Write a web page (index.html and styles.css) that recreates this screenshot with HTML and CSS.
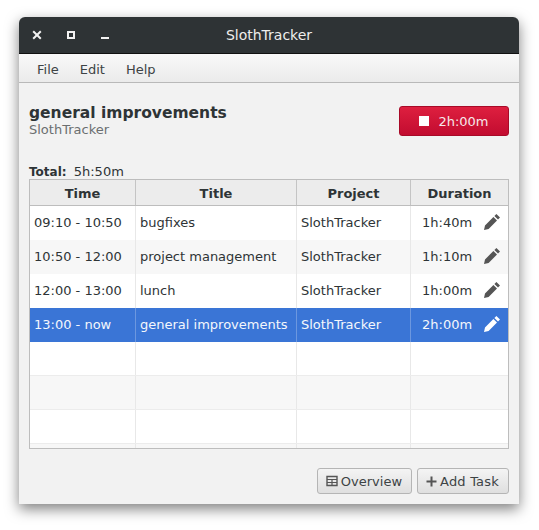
FILE: index.html
```html
<!DOCTYPE html>
<html lang="en">
<head>
    <meta charset="UTF-8">
    <title>SlothTracker</title>
    <link rel="stylesheet" href="styles.css">
</head>
<body>
    <div class="window">
        <div class="titlebar">
            <div class="controls">
                <svg class="ctl" width="12" height="12" viewBox="0 0 12 12"><path d="M2.2 2.2l7.6 7.6M9.8 2.2l-7.6 7.6" stroke="#f2f2f2" stroke-width="2" fill="none"/></svg>
                <svg class="ctl" width="12" height="12" viewBox="0 0 12 12"><rect x="3" y="3" width="6" height="6" stroke="#f2f2f2" stroke-width="2" fill="none"/></svg>
                <svg class="ctl" width="12" height="12" viewBox="0 0 12 12"><rect x="2" y="8" width="8" height="2" fill="#f2f2f2"/></svg>
            </div>
            <div class="title">SlothTracker</div>
        </div>
        <div class="menubar">
            <span>File</span>
            <span>Edit</span>
            <span>Help</span>
        </div>
        <div class="content">
            <div class="current">
                <div>
                    <div class="task-name">general improvements</div>
                    <div class="task-project">SlothTracker</div>
                </div>
                <button class="stop"><i class="stop-icon"></i>2h:00m</button>
            </div>
            <div class="total"><b>Total:</b> 5h:50m</div>
            <div class="table">
                <div class="row head">
                    <div>Time</div><div>Title</div><div>Project</div><div>Duration</div>
                </div>
                <div class="row">
                    <div>09:10 - 10:50</div><div>bugfixes</div><div>SlothTracker</div>
                    <div class="dur">1h:40m <svg class="pen" viewBox="0 0 16 16"><path d="M12.4 0l3.6 3.6-2 2-3.6-3.6zM9.4 3l3.6 3.6-8.4 8.4-4.6 1 1-4.6z"/></svg></div>
                </div>
                <div class="row alt">
                    <div>10:50 - 12:00</div><div>project management</div><div>SlothTracker</div>
                    <div class="dur">1h:10m <svg class="pen" viewBox="0 0 16 16"><path d="M12.4 0l3.6 3.6-2 2-3.6-3.6zM9.4 3l3.6 3.6-8.4 8.4-4.6 1 1-4.6z"/></svg></div>
                </div>
                <div class="row">
                    <div>12:00 - 13:00</div><div>lunch</div><div>SlothTracker</div>
                    <div class="dur">1h:00m <svg class="pen" viewBox="0 0 16 16"><path d="M12.4 0l3.6 3.6-2 2-3.6-3.6zM9.4 3l3.6 3.6-8.4 8.4-4.6 1 1-4.6z"/></svg></div>
                </div>
                <div class="row selected">
                    <div>13:00 - now</div><div>general improvements</div><div>SlothTracker</div>
                    <div class="dur">2h:00m <svg class="pen" viewBox="0 0 16 16"><path d="M12.4 0l3.6 3.6-2 2-3.6-3.6zM9.4 3l3.6 3.6-8.4 8.4-4.6 1 1-4.6z"/></svg></div>
                </div>
                <div class="row empty"><div></div><div></div><div></div><div></div></div>
                <div class="row empty alt"><div></div><div></div><div></div><div></div></div>
                <div class="row empty"><div></div><div></div><div></div><div></div></div>
                <div class="row empty alt"><div></div><div></div><div></div><div></div></div>
            </div>
            <div class="actions">
                <button class="btn">
                    <svg width="12" height="12" viewBox="0 0 12 12"><path d="M1 1.5h10v9H1z" fill="none" stroke="#555" stroke-width="1.4"/><path d="M1 4.5h10M1 7.5h10M6 4.5v6" stroke="#555" stroke-width="1.2"/></svg>
                    Overview
                </button>
                <button class="btn add">
                    <svg width="11" height="11" viewBox="0 0 11 11"><path d="M5.5 .5v10M.5 5.5h10" stroke="#555" stroke-width="2"/></svg>
                    Add Task
                </button>
            </div>
        </div>
    </div>
</body>
</html>
```

FILE: styles.css
```css
/* Page */
body {
    margin: 0;
    padding: 17px 0 0 19px;
    min-height: 100vh;
    box-sizing: border-box;
    background: #fff;
    font-family: 'DejaVu Sans', sans-serif;
    font-size: 13px;
    color: #2e3436;
    overflow: hidden;
}

/* Window */
.window {
    width: 500px;
    height: 487px;
    display: flex;
    flex-direction: column;
    background: #f2f2f2;
    border-radius: 6px 6px 0 0;
    box-shadow: 0 5px 14px rgba(0, 0, 0, 0.5);
}

/* Title bar */
.titlebar {
    position: relative;
    height: 36px;
    flex: none;
    background: #2e3335;
    border-bottom: 1px solid #111;
    border-radius: 6px 6px 0 0;
    display: flex;
    align-items: center;
    justify-content: center;
}

.controls {
    position: absolute;
    left: 12px;
    top: 12px;
    display: flex;
    gap: 22px;
}

.ctl {
    display: block;
}

.title {
    color: #eeeeec;
    font-size: 14px;
}

/* Menu */
.menubar {
    height: 29px;
    flex: none;
    display: flex;
    align-items: center;
    gap: 21px;
    padding: 2px 0 0 18px;
    box-sizing: border-box;
    background: linear-gradient(to bottom, #f9f9f9, #ebebeb);
    border-bottom: 1px solid #b9b9b9;
    color: #3d4345;
}

/* Content */
.content {
    flex: 1;
    display: flex;
    flex-direction: column;
    padding: 0 10px;
}

.current {
    display: flex;
    justify-content: space-between;
    align-items: flex-start;
    padding-top: 23px;
    height: 57px;
}

.task-name {
    margin-top: -2px;
    font-size: 15.5px;
    font-weight: bold;
    line-height: 18px;
}

.task-project {
    color: #6b6f70;
    line-height: 15px;
}

.stop {
    width: 110px;
    height: 30px;
    display: flex;
    align-items: center;
    justify-content: center;
    gap: 9px;
    padding: 0;
    background: linear-gradient(to bottom, #de1f3f, #c20c30);
    border: 1px solid #a80a28;
    border-radius: 3px;
    color: #f6e9eb;
    font: inherit;
}

.stop-icon {
    width: 10px;
    height: 10px;
    background: #fff;
}

.total {
    height: 15px;
    margin-top: 1px;
    line-height: 15px;
}

.total b {
    margin-right: 3px;
    font-size: 12px;
}

/* Table */
.table {
    height: 270px;
    flex: none;
    overflow: hidden;
    border: 1px solid #bdbdbd;
    background: #fff;
    box-sizing: border-box;
}

.row {
    display: grid;
    grid-template-columns: 106px 161px 114px 97px;
    height: 34px;
    background: #fff;
}

.row > div {
    display: flex;
    align-items: center;
    padding: 0 0 2px 4px;
    border-right: 1px solid #e8e8e8;
    box-sizing: border-box;
    white-space: nowrap;
}

.row > div:last-child {
    border-right: none;
}

.row.alt {
    background: #f7f7f7;
}

.row.head {
    height: 26px;
    background: #ececec;
    border-bottom: 1px solid #bdbdbd;
    box-sizing: border-box;
    font-weight: bold;
}

.head > div {
    justify-content: center;
    padding: 2px 0 0;
    border-right-color: #c4c4c4;
}

.row .dur {
    padding-left: 11px;
}

.pen {
    width: 16px;
    height: 16px;
    margin-left: 12px;
    fill: #555;
}

.row.selected {
    background: #3a75d6;
    color: #f4f7fc;
}

.selected > div {
    border-right-color: #6c97df;
}

.selected .pen {
    fill: #fff;
}

.row.empty {
    border-bottom: 1px solid #ececec;
    box-sizing: border-box;
}

/* Bottom buttons */
.actions {
    display: flex;
    justify-content: flex-end;
    gap: 5px;
    margin-top: 19px;
}

.btn {
    height: 26px;
    display: flex;
    align-items: center;
    gap: 3px;
    padding: 0 9px 0 8px;
    background: linear-gradient(to bottom, #f4f4f4, #dfdfdf);
    border: 1px solid #b5b5b5;
    border-radius: 3px;
    color: #3d4345;
    font: inherit;
}

.btn.add {
    letter-spacing: 0.2px;
}
```
